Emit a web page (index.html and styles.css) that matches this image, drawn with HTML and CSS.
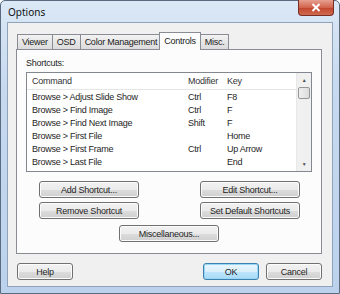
FILE: index.html
```html
<!DOCTYPE html>
<html lang="en">
<head>
  <meta charset="UTF-8">
  <title>Options</title>
  <link rel="stylesheet" href="styles.css">
</head>
<body>
  <div class="window">
    <div class="titlebar">
      <span class="title">Options</span>
      <button class="close-btn">
        <svg width="10" height="9" viewBox="0 0 10 9"><path d="M1.5 1 L8.5 8 M8.5 1 L1.5 8" stroke="#fff" stroke-width="2" fill="none"/></svg>
      </button>
    </div>

    <div class="client">
      <div class="tabs">
        <div class="tab">Viewer</div>
        <div class="tab">OSD</div>
        <div class="tab">Color Management</div>
        <div class="tab active">Controls</div>
        <div class="tab">Misc.</div>
      </div>

      <div class="panel">
        <div class="label">Shortcuts:</div>

        <div class="listbox">
          <div class="list-main">
            <div class="row header">
              <span class="c-cmd">Command</span>
              <span class="c-mod">Modifier</span>
              <span class="c-key">Key</span>
            </div>
            <div class="row"><span class="c-cmd">Browse &gt; Adjust Slide Show</span><span class="c-mod">Ctrl</span><span class="c-key">F8</span></div>
            <div class="row"><span class="c-cmd">Browse &gt; Find Image</span><span class="c-mod">Ctrl</span><span class="c-key">F</span></div>
            <div class="row"><span class="c-cmd">Browse &gt; Find Next Image</span><span class="c-mod">Shift</span><span class="c-key">F</span></div>
            <div class="row"><span class="c-cmd">Browse &gt; First File</span><span class="c-mod"></span><span class="c-key">Home</span></div>
            <div class="row"><span class="c-cmd">Browse &gt; First Frame</span><span class="c-mod">Ctrl</span><span class="c-key">Up Arrow</span></div>
            <div class="row"><span class="c-cmd">Browse &gt; Last File</span><span class="c-mod"></span><span class="c-key">End</span></div>
          </div>
          <div class="scrollbar">
            <div class="arrow">&#9650;</div>
            <div class="track"><div class="thumb"></div></div>
            <div class="arrow">&#9660;</div>
          </div>
        </div>

        <div class="btn-grid">
          <button class="btn">Add Shortcut...</button>
          <button class="btn">Edit Shortcut...</button>
          <button class="btn">Remove Shortcut</button>
          <button class="btn">Set Default Shortcuts</button>
        </div>

        <div class="misc-row">
          <button class="btn">Miscellaneous...</button>
        </div>
      </div>

      <div class="footer">
        <button class="btn small">Help</button>
        <div class="footer-right">
          <button class="btn small default">OK</button>
          <button class="btn small">Cancel</button>
        </div>
      </div>
    </div>
  </div>
</body>
</html>
```

FILE: styles.css
```css
* {
  box-sizing: border-box;
}

body {
  margin: 0;
  padding: 0;
  width: 340px;
  height: 294px;
  overflow: hidden;
  font-family: 'Liberation Sans', Arial, sans-serif;
  font-size: 9px;
  letter-spacing: -0.25px;
  color: #1e1e1e;
  background: #fff;
}

.window {
  width: 340px;
  height: 294px;
  display: flex;
  flex-direction: column;
  border: 1px solid #5a6b80;
  border-radius: 5px 5px 0 0;
  background: linear-gradient(#dbe8f6, #c6d9ef 30%, #bcd2ec);
  padding: 0 6px 6px 6px;
}

.titlebar {
  height: 21px;
  display: flex;
  align-items: flex-start;
  justify-content: space-between;
  flex-shrink: 0;
}

.title {
  font-family: 'Noto Sans', sans-serif;
  font-size: 10px;
  letter-spacing: 0;
  color: #111;
  margin-top: 4px;
  margin-left: 1px;
}

.close-btn {
  width: 36px;
  height: 16px;
  margin-top: -1px;
  margin-right: -1px;
  border: 1px solid #7a2d22;
  border-top: none;
  border-radius: 0 0 4px 4px;
  background: linear-gradient(#e6a090, #d2644e 50%, #c2432d 51%, #cf6a4f);
  display: flex;
  align-items: center;
  justify-content: center;
  padding: 0;
}

.client {
  flex: 1;
  background: #f0f0f0;
  border: 1px solid #8fa3bb;
  padding: 9px 10px 0 8px;
  display: flex;
  flex-direction: column;
}

.tabs {
  display: flex;
  align-items: flex-end;
  height: 17px;
  padding-left: 1px;
  position: relative;
  z-index: 1;
}

.tab {
  height: 15px;
  padding: 0 4px;
  line-height: 14px;
  border: 1px solid #898c95;
  border-bottom: none;
  margin-right: -1px;
  background: linear-gradient(#f3f3f3, #e6e6e6 50%, #dcdcdc);
  color: #222;
}

.tab.active {
  height: 18px;
  margin: 0 -1px 0 -2px;
  padding: 0 4px;
  background: #fcfcfc;
  line-height: 16px;
  margin-bottom: -1px;
}

.panel {
  height: 205px;
  border: 1px solid #898c95;
  background: #fcfcfc;
  padding: 6px 9px 0 9px;
}

.label {
  height: 14px;
  line-height: 14px;
  margin-bottom: 2px;
}

.listbox {
  display: flex;
  height: 100px;
  border: 1px solid #828790;
  background: #fff;
}

.list-main {
  flex: 1;
}

.row {
  display: flex;
  height: 13px;
  line-height: 13px;
  padding-left: 5px;
}

.row.header {
  height: 17px;
  line-height: 16px;
  border-bottom: 1px solid #e5e5e5;
  margin-bottom: 1px;
  color: #333;
}

.c-cmd {
  width: 156px;
}

.c-mod {
  width: 39px;
}

.c-key {
  flex: 1;
}

.scrollbar {
  width: 15px;
  display: flex;
  flex-direction: column;
  background: #f0f0f0;
  border-left: 1px solid #e8e8e8;
}

.arrow {
  height: 14px;
  font-size: 5px;
  color: #4d4d4d;
  text-align: center;
  line-height: 14px;
}

.track {
  flex: 1;
}

.thumb {
  height: 12px;
  margin: 0 1px;
  border: 1px solid #969696;
  border-radius: 2px;
  background: linear-gradient(90deg, #f0f0f0, #dcdcdc);
}

.btn {
  font-family: inherit;
  font-size: 9px;
  letter-spacing: -0.25px;
  color: #1e1e1e;
  height: 17px;
  padding: 0;
  border: 1px solid #707070;
  border-radius: 3px;
  background: linear-gradient(#f2f2f2, #ebebeb 50%, #dddddd 51%, #cfcfcf);
  box-shadow: inset 0 0 0 1px #fcfcfc;
}

.btn-grid {
  display: grid;
  grid-template-columns: 100px 100px;
  justify-content: space-between;
  row-gap: 4px;
  margin: 9px 12px 0 13px;
}

.misc-row {
  display: flex;
  justify-content: center;
  margin-top: 6px;
}

.misc-row .btn {
  width: 100px;
}

.footer {
  display: flex;
  justify-content: space-between;
  margin-top: 9px;
  padding-left: 1px;
}

.footer-right {
  display: flex;
  gap: 7px;
}

.btn.small {
  width: 56px;
}

.btn.default {
  border-color: #3c7fb1;
  background: linear-gradient(#eaf6fd, #d9f0fc 50%, #bee6fd 51%, #a7d9f5);
  box-shadow: inset 0 0 0 1px #9ad7f5;
}
```
